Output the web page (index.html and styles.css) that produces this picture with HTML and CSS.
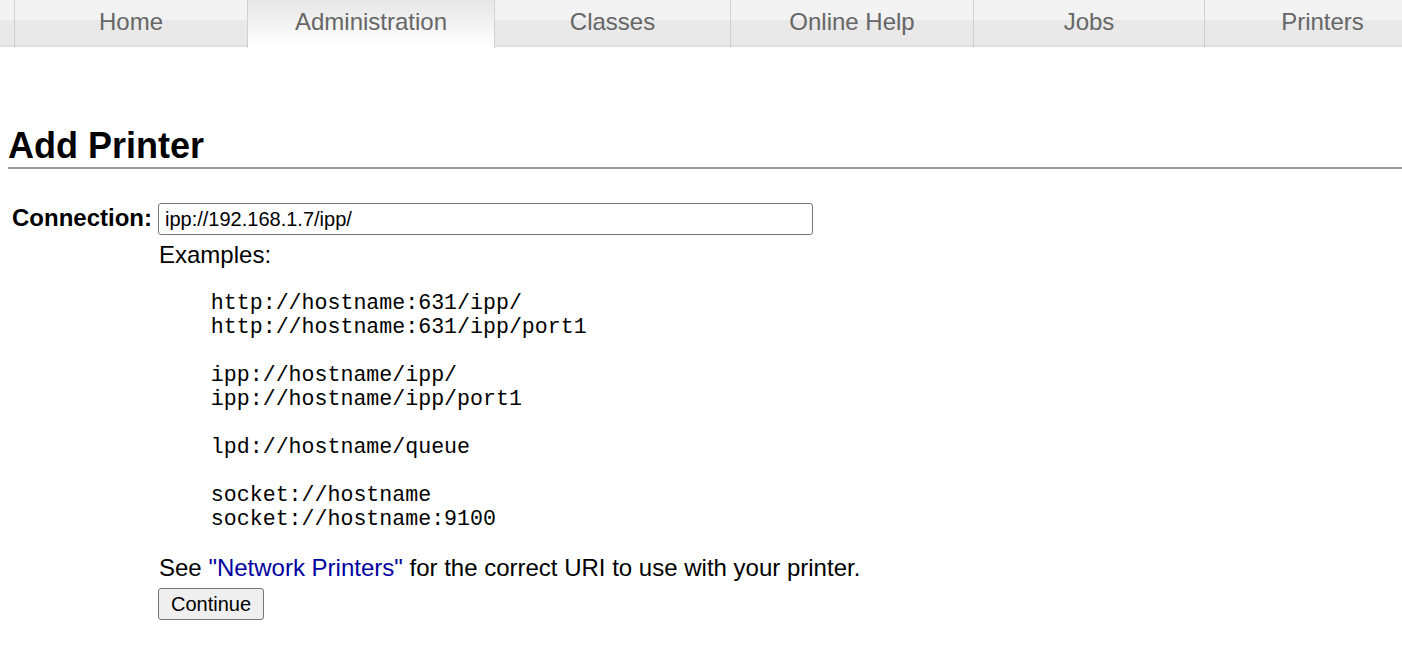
FILE: index.html
```html
<!DOCTYPE html>
<html>
<head>
<meta charset="utf-8">
<title>Add Printer - CUPS</title>
<link rel="stylesheet" href="styles.css">
</head>
<body>
<nav class="tabs">
  <div class="tab tab-edge"></div>
  <a class="tab tab-home" href="#">Home</a>
  <a class="tab tab-admin active" href="#">Administration</a>
  <a class="tab tab-classes" href="#">Classes</a>
  <a class="tab tab-help" href="#">Online Help</a>
  <a class="tab tab-jobs" href="#">Jobs</a>
  <a class="tab tab-printers" href="#">Printers</a>
</nav>
<main class="page">
  <h1 class="title">Add Printer</h1>
  <form class="form">
    <label class="label" for="uri">Connection:</label>
    <div class="field">
      <input class="uri" id="uri" type="text" value="ipp://192.168.1.7/ipp/">
      <p class="examples">Examples:</p>
<pre class="list">    http://hostname:631/ipp/
    http://hostname:631/ipp/port1

    ipp://hostname/ipp/
    ipp://hostname/ipp/port1

    lpd://hostname/queue

    socket://hostname
    socket://hostname:9100</pre>
      <p class="note">See <a class="link" href="#">"Network Printers"</a> for the correct URI to use with your printer.</p>
      <button class="btn" type="button">Continue</button>
    </div>
  </form>
</main>
</body>
</html>
```
FILE: styles.css
```css
html, body {
  margin: 0;
  padding: 0;
  background: #fff;
  overflow: hidden;
}
body {
  font-family: "Liberation Sans", Arial, sans-serif;
  color: #000;
  font-size: 24px;
}
.tabs {
  display: flex;
  height: 48px;
  width: 100%;
  overflow: hidden;
}
.tab {
  flex: none;
  box-sizing: border-box;
  height: 48px;
  border-left: 1px solid #d0d0d0;
  background: linear-gradient(#f3f3f3 0, #f3f3f3 20px, #e9e9e9 20px, #e9e9e9 45px, #dedede 45px, #dedede 47px, #fff 47px);
  color: #666;
  text-decoration: none;
  text-align: center;
  line-height: 44px;
  font-size: 24px;
}
.tab-edge { width: 14px; border-left: none; }
.tab-home { width: 233px; }
.tab-admin { width: 247px; }
.tab-classes { width: 236px; }
.tab-help { width: 243px; }
.tab-jobs { width: 231px; }
.tab-printers { width: 236px; }
.tab.active {
  background: linear-gradient(#e6e6e6, #fff 47px);
}
.page {
  padding-left: 8px;
}
.title {
  margin: 77px 0 0 0;
  font-size: 36px;
  line-height: 42px;
  font-weight: bold;
  padding-bottom: 0;
  border-bottom: 2px solid #999;
}
.form {
  display: grid;
  grid-template-columns: 150px auto;
  margin-top: 34px;
}
.label {
  text-align: right;
  padding-right: 6px;
  font-weight: bold;
  line-height: 30px;
}
.field {
  display: flex;
  flex-direction: column;
  align-items: flex-start;
}
.uri {
  box-sizing: border-box;
  width: 655px;
  height: 32px;
  margin: 0;
  padding: 0 6px;
  border: 1px solid #767676;
  border-radius: 3px;
  font-family: "Liberation Sans", Arial, sans-serif;
  font-size: 20px;
  color: #000;
}
.examples {
  margin: 6px 0 0 1px;
  line-height: 27.6px;
}
.list {
  margin: 22px 0 0 1px;
  font-family: "Liberation Mono", "Courier New", monospace;
  font-size: 21.6px;
  line-height: 24px;
}
.note {
  margin: 23px 0 0 1px;
  line-height: 27.6px;
}
.link {
  color: #0000a0;
  text-decoration: none;
}
.btn {
  margin-top: 7px;
  box-sizing: border-box;
  height: 32px;
  padding: 0 12px;
  border: 1px solid #767676;
  border-radius: 3px;
  background: #efefef;
  font-family: "Liberation Sans", Arial, sans-serif;
  font-size: 20px;
  color: #000;
}
```
